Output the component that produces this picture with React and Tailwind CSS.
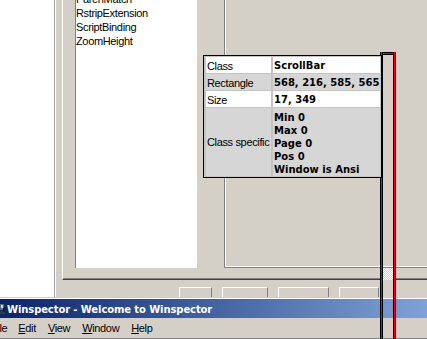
const listItems = ['ParenMatch', 'RstripExtension', 'ScriptBinding', 'ZoomHeight'];

const infoRows = [
  { label: 'Class', value: ['ScrollBar'], white: true },
  { label: 'Rectangle', value: ['568, 216, 585, 565'], white: false },
  { label: 'Size', value: ['17, 349'], white: true },
  { label: 'Class specific', value: ['Min 0', 'Max 0', 'Page 0', 'Pos 0', 'Window is Ansi'], white: false },
];

const menuItems = [
  { key: 'F', rest: 'ile', pad: 'pl-[6px] pr-[5px]' },
  { key: 'E', rest: 'dit', pad: 'px-[6px]' },
  { key: 'V', rest: 'iew', pad: 'px-[6px]' },
  { key: 'W', rest: 'indow', pad: 'px-[6px]' },
  { key: 'H', rest: 'elp', pad: 'px-[6px]' },
];

const statusPanes = ['w-[33px]', 'w-[46px]', 'w-[51px]', 'w-[40px]'];

function InfoTip() {
  return (
    <div className="absolute left-[203px] top-[55px] w-[179px] h-[123px] border border-black bg-[#c4c4c4] z-20">
      <div className="grid grid-cols-[65px_107px] gap-x-[2px] gap-y-px pl-[2px] pt-px">
        {infoRows.map((row) => {
          const bg = row.white ? 'bg-white' : 'bg-[#d6d6d6]';
          const tall = row.value.length > 1;
          return (
            <div key={row.label} className="contents">
              <div className={`${bg} ${tall ? 'h-[68px] flex items-center' : 'h-[16px] leading-[16px] pt-px'} pl-px whitespace-nowrap`}>
                {row.label}
              </div>
              <div className={`${bg} ${tall ? 'h-[68px] pt-[3px]' : 'h-[16px] leading-[16px] pt-px'} pl-px font-['DejaVu_Sans',sans-serif] font-bold text-[10px] tracking-normal whitespace-nowrap`}>
                {row.value.map((line) => (
                  <div key={line} className={tall ? 'leading-[13px]' : ''}>{line}</div>
                ))}
              </div>
            </div>
          );
        })}
      </div>
    </div>
  );
}

// black / red / black line, 3px thick
function FrameEdge({ vertical }) {
  const line = vertical ? 'w-px h-full' : 'h-px w-full';
  return (
    <div className={`flex ${vertical ? 'flex-row h-full' : 'flex-col w-full'} shrink-0`}>
      <div className={`${line} bg-black`} />
      <div className={`${line} bg-[#ff0000]`} />
      <div className={`${line} bg-black`} />
    </div>
  );
}

export default function App() {
  return (
    <div className="relative w-[427px] h-[339px] overflow-hidden bg-[#d4d0c8] font-['Liberation_Sans',Arial,sans-serif] text-[11px] text-black tracking-[-0.35px]">
      {/* window behind */}
      <div className="flex h-[297px]">
        <div className="w-[54px] bg-white" />
        <div className="w-[2px] border-l border-[#a0a0a0] bg-white" />
        <div className="flex flex-1 flex-col pl-[6px]">
          <div className="h-[280px] border-l border-white border-b border-b-[#404040]">
            <div className="h-full border-b border-[#808080] flex pl-[12px]">
              <div className="w-[122px] h-[268px] border-l border-[#808080] bg-white overflow-hidden">
                <div className="-mt-[8px]">
                  {listItems.map((item) => (
                    <div key={item} className="h-[14px] leading-[14px] whitespace-nowrap">{item}</div>
                  ))}
                </div>
              </div>
              <div className="flex-1 ml-[27px] h-[268px] border-l border-b border-[#808080]">
                <div className="h-full border-l border-b border-white" />
              </div>
            </div>
          </div>
          {/* status bar */}
          <div className="flex gap-[10px] pl-[117px] pt-[7px]">
            {statusPanes.map((w, i) => (
              <div key={i} className={`${w} h-[10px] border-t border-l border-white border-r border-r-[#808080]`} />
            ))}
          </div>
        </div>
      </div>

      {/* Winspector window */}
      <div className="h-[2px] border-b border-white" />
      <div className="h-[19px] flex items-center bg-[linear-gradient(to_right,#0a246a,#7ea2d6)]">
        <svg width="6" height="12" viewBox="0 0 6 12" className="shrink-0">
          <rect x="0" y="1" width="4" height="6" fill="#5a6e7a" />
          <rect x="1" y="2" width="2" height="3" fill="#c8d8e0" />
          <rect x="0" y="8" width="5" height="3" fill="#303840" />
          <rect x="3" y="5" width="2" height="4" fill="#1a2028" />
        </svg>
        <span className="pl-px pt-px font-['DejaVu_Sans',sans-serif] font-bold text-[10px] tracking-[-0.1px] text-white whitespace-nowrap">
          Winspector - Welcome to Winspector
        </span>
      </div>
      <div className="h-[20px] flex items-center -ml-[15px] border-b border-[#808080] box-content">
        {menuItems.map((m) => (
          <div key={m.key} className={`${m.pad} leading-[20px] whitespace-nowrap`}>
            <span className="underline underline-offset-[1px]">{m.key}</span>{m.rest}
          </div>
        ))}
      </div>

      {/* scrollbar size box under highlight */}
      <div className="absolute left-[383px] top-[268px] w-[10px] h-[12px] bg-[repeating-conic-gradient(#ffffff_0%_25%,#d4d0c8_0%_50%)] bg-[length:2px_2px]" />

      {/* highlight frame */}
      <div className="absolute left-[380px] top-[52px] w-[16px] h-[300px] z-10 flex">
        <FrameEdge vertical />
        <div className="flex-1">
          <FrameEdge />
        </div>
        <FrameEdge vertical />
      </div>

      <InfoTip />
    </div>
  );
}
